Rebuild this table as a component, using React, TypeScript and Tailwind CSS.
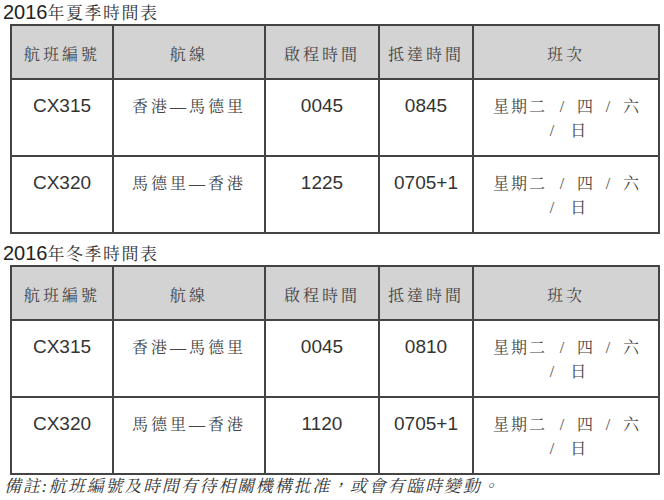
import React from 'react'

interface Flight {
  code: string
  route: string
  depart: string
  arrive: string
}

const summer: Flight[] = [
  { code: 'CX315', route: '香港—馬德里', depart: '0045', arrive: '0845' },
  { code: 'CX320', route: '馬德里—香港', depart: '1225', arrive: '0705+1' },
]

const winter: Flight[] = [
  { code: 'CX315', route: '香港—馬德里', depart: '0045', arrive: '0810' },
  { code: 'CX320', route: '馬德里—香港', depart: '1120', arrive: '0705+1' },
]

const cjk = "font-['Liberation_Serif','Noto_Serif_CJK_TC','Noto_Sans_CJK_TC',serif]"

const Title = ({ season, className }: { season: string; className?: string }) => (
  <div className={`h-[24px] pl-[3px] leading-[24px] text-[20px] text-[#222] whitespace-nowrap ${className ?? ''}`}>
    <span className="align-baseline">2016</span>
    <span className={`${cjk} text-[17px] tracking-[1.5px] text-[#333]`}>年{season}季時間表</span>
  </div>
)

const Schedule = () => (
  <div className={`${cjk} text-[16px] text-[#444] leading-[24px]`}>
    <div className="flex justify-between px-[19px]">
      <span className="tracking-[2px]">星期二</span>
      <span>/</span>
      <span>四</span>
      <span>/</span>
      <span>六</span>
    </div>
    <div className="flex justify-center gap-[16px] pl-[4px]">
      <span>/</span>
      <span>日</span>
    </div>
  </div>
)

const Timetable = ({ rows }: { rows: Flight[] }) => (
  <table className="ml-[10px] w-[650px] table-fixed border-collapse border-2 border-[#444]">
    <colgroup>
      <col className="w-[102px]" />
      <col className="w-[152px]" />
      <col className="w-[114px]" />
      <col className="w-[94px]" />
      <col />
    </colgroup>
    <thead>
      <tr className={`h-[54px] bg-[#d3d3d3] ${cjk} text-[16px] tracking-[3px] text-[#444]`}>
        {['航班編號', '航線', '啟程時間', '抵達時間', '班次'].map((h) => (
          <th key={h} className="border-2 border-[#444] pt-[5px] text-center font-normal align-middle">
            {h}
          </th>
        ))}
      </tr>
    </thead>
    <tbody>
      {rows.map((r) => (
        <tr key={r.code} className="h-[77px]">
          <td className="border-2 border-[#444] pt-[13px] text-center align-top text-[19px] leading-[25px] text-[#333]">
            {r.code}
          </td>
          <td className={`border-2 border-[#444] pt-[15px] text-center align-top ${cjk} text-[16px] tracking-[3px] leading-[24px] text-[#444]`}>
            {r.route}
          </td>
          <td className="border-2 border-[#444] pt-[13px] text-center align-top text-[19px] leading-[25px] text-[#333]">
            {r.depart}
          </td>
          <td className="border-2 border-[#444] pt-[13px] text-center align-top text-[19px] leading-[25px] text-[#333]">
            {r.arrive}
          </td>
          <td className="border-2 border-[#444] pt-[15px] align-top">
            <Schedule />
          </td>
        </tr>
      ))}
    </tbody>
  </table>
)

export default function App() {
  return (
    <div className="w-[664px] h-[500px] overflow-hidden bg-white font-['Liberation_Sans',Arial,'Noto_Sans_CJK_TC',sans-serif]">
      <Title season="夏" />
      <Timetable rows={summer} />
      <Title season="冬" className="mt-[7px]" />
      <Timetable rows={winter} />
      <div className={`pl-[4px] ${cjk} italic text-[17px] tracking-[1.8px] leading-[24px] text-[#333] whitespace-nowrap`}>
        備註:航班編號及時間有待相關機構批准，或會有臨時變動。
      </div>
    </div>
  )
}
